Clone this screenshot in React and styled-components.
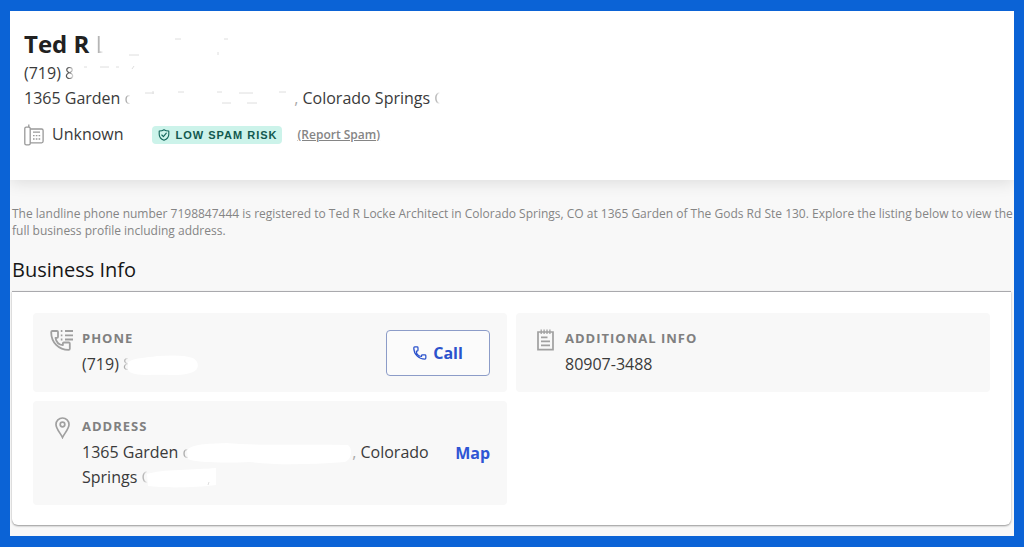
import React from "react"
import styled, { createGlobalStyle } from "styled-components";

const GlobalStyle = createGlobalStyle`
	* {
		box-sizing: border-box;
	}
	body {
		margin: 0;
		background: #0b63d6;
		color: #3a3a3a;
		font-family: "Open Sans", "Noto Sans", sans-serif;
		font-size: 16px;
		line-height: 25px;
	}
	h1, h2, h3, p {
		margin: 0;
	}
`

const DeskPhoneIcon = () => (
	<svg width="20" height="22" viewBox="0 0 20 22" fill="none" stroke="#999" strokeWidth="1.3" aria-hidden="true">
		<rect x="0.8" y="3.2" width="5.4" height="17.6" rx="1.4" />
		<path d="M4.8 3V0.5M6.2 5H17.6a1.5 1.5 0 0 1 1.5 1.5v10.8a1.5 1.5 0 0 1-1.5 1.5H6.2" />
		<path d="M9 8.2h7M9 11.7h1.6M11.8 11.7h1.6M14.6 11.7h1.6M9 15h1.6M11.8 15h1.6M14.6 15h1.6" />
	</svg>
)

const ShieldIcon = () => (
	<svg width="12" height="12" viewBox="0 0 12 12" fill="none" stroke="#12655a" strokeWidth="1.1" strokeLinejoin="round" strokeLinecap="round" aria-hidden="true">
		<path d="M6 0.7C4.6 1.7 3 2 1.2 2v3.2c0 3 1.8 5 4.8 6.1 3-1.1 4.8-3.1 4.8-6.1V2C9 2 7.4 1.7 6 0.7z" />
		<path d="M3.8 6l1.6 1.6 2.9-3.4" />
	</svg>
)

const PhoneListIcon = () => (
	<svg width="24" height="23" viewBox="0 0 24 23" fill="none" stroke="#a0a0a0" strokeWidth="1.8" strokeLinejoin="round" aria-hidden="true">
		<path d="M2.4 2H7c.6 0 1 .4 1 1v4.8c0 .6-.4 1-1 1H5.5c.6 4 3.3 6.8 7.4 7.4v-1.7c0-.6.4-1 1-1h4.9c.6 0 1 .4 1 1v5.2c0 .7-.5 1.2-1.2 1.2C8.7 20.9 1.2 13.5 1.2 3.3c0-.8.4-1.3 1.2-1.3z" />
		<path d="M15 2h8M15 6.3h8M15 10.5h8M10.8 2h1.6M10.8 6.3h1.6M10.8 10.5h1.6" />
	</svg>
)

const CallIcon = () => (
	<svg width="14" height="14" viewBox="0 0 18 18" fill="none" stroke="#2b52cc" strokeWidth="1.6" strokeLinejoin="round" aria-hidden="true">
		<path d="M2.2 1.2h3.1c.7 0 1.1.5 1.1 1.1v3.3c0 .7-.4 1.1-1.1 1.1H4.2c.4 3.7 3.1 6.4 6.8 6.8v-1.1c0-.7.4-1.1 1.1-1.1h3.3c.7 0 1.1.4 1.1 1.1v3.1c0 .8-.5 1.3-1.3 1.3C7.3 16.8 1 10.5 1 2.5c0-.8.4-1.3 1.2-1.3z" />
	</svg>
)

const NotepadIcon = () => (
	<svg width="17" height="22" viewBox="0 0 17 22" fill="none" stroke="#a0a0a0" strokeWidth="1.7" aria-hidden="true">
		<path d="M1 3h15v17.6H1z" />
		<path d="M4.2 0.5v4.5M7.1 0.5v4.5M10 0.5v4.5M12.9 0.5v4.5" strokeWidth="1.3" />
		<path d="M4 8.3h6.5M4 12.3h9M4 16.3h9" />
	</svg>
)

const PinIcon = () => (
	<svg width="15" height="22" viewBox="0 0 15 22" fill="none" stroke="#a0a0a0" strokeWidth="1.7" aria-hidden="true">
		<path d="M7.5 20.5C5.5 16.2 1 11.8 1 7.5a6.5 6.5 0 0 1 13 0c0 4.300-4.500 8.700-6.500 13z" />
		<circle cx="7.5" cy="7.5" r="2.3" />
	</svg>
)

// brushed-out part of a line, with the few specks the brush left behind
const Redacted = ({width, blob, specks})=>{
	return <Brush width={width} height="22" viewBox={`0 0 ${width} 22`} aria-hidden="true">
		{blob && <path fill="#fff" d={blob} />}
		{specks && <path d={specks} fill="none" stroke="#dedede" strokeWidth="1" />}
	</Brush>
}

const InfoPanel = ({icon, title, action, children})=>{
	return <Panel>
		<IconBox>{icon}</IconBox>
		<PanelText>
			<PanelTitle>{title}</PanelTitle>
			<p>{children}</p>
		</PanelText>
		{action}
	</Panel>
}

const App = ()=>{
	return <Frame>
		<GlobalStyle />
		<Header>
			<Name>Ted R <Faint>L</Faint><Redacted width={133} specks="M67 3h6M116 3h4M110 19v-3M21 19h10" /></Name>
			<p>(719) <Faint $strong>8</Faint><Redacted width={70} specks="M10 3h3M26 3h9M42 3h3M60 2l-2 3" /></p>
			<p>1365 Garden <Faint>o</Faint><Redacted width={160} specks="M11 4h9M19 2v3M44 3h6M83 3h5M105 4h14M88 14h9M113 14h10M145 3h7" /><Pale>,</Pale> Colorado Springs <Faint>C</Faint></p>
			<Status>
				<LineType><DeskPhoneIcon />Unknown</LineType>
				<Badge><ShieldIcon />LOW SPAM RISK</Badge>
				<Report href="#report">(Report Spam)</Report>
			</Status>
		</Header>

		<Main>
			<Summary>The landline phone number 7198847444 is registered to Ted R Locke Architect in Colorado Springs, CO at 1365 Garden of The Gods Rd Ste 130. Explore the listing below to view the full business profile including address.</Summary>
			<SectionTitle>Business Info</SectionTitle>
			<Card>
				<InfoPanel icon={<PhoneListIcon />} title="PHONE" action={<CallButton type="button"><CallIcon />Call</CallButton>}>
					(719) <Faint>8</Faint><Redacted width={66} blob="M-4 7C4 2 15 3 25 1C40 0 53 0 61 3C68 7 67 15 61 17C50 22 30 19 17 20C6 20 -2 19 -4 15z" />
				</InfoPanel>
				<InfoPanel icon={<NotepadIcon />} title="ADDITIONAL INFO">80907-3488</InfoPanel>
				<InfoPanel icon={<PinIcon />} title="ADDRESS" action={<MapLink href="#map">Map</MapLink>}>
					1365 Garden <Faint>o</Faint><Redacted width={160} blob="M-5 7C2 0 20 1 34 0C66 3 114 1 156 2C161 6 160 16 153 19C114 22 80 22 58 19C36 20 4 20 -4 16z" /><Pale>,</Pale> Colorado Springs <Faint>C</Faint><Redacted width={64} blob="M-5 6C10 1 43 2 64 0V17C43 20 10 20 -4 18z" specks="M56 17l1-3" />
				</InfoPanel>
			</Card>
		</Main>
	</Frame>
}

export default App;


const Frame = styled.div`
	display: flex;
	flex-direction: column;
	min-height: 100vh;
	border: solid #0b63d6;
	border-width: 11px 10px;
	background: #f8f8f8;
`

const Header = styled.header`
	padding: 17px 14px 33px;
	background: #fff;
	box-shadow: 0 2px 16px rgba(0, 0, 0, 0.12);
	clip-path: inset(0 0 -24px 0);
`

const Name = styled.h1`
	margin-bottom: 1px;
	font-size: 24px;
	line-height: 32px;
	font-weight: 700;
	color: #212121;
`

const Brush = styled.svg`
	overflow: visible;
	vertical-align: middle;
`

const Faint = styled.span`
	font-weight: 400;
	color: transparent;
	background: ${(props) => props.$strong
		? "linear-gradient(90deg, #555 40%, #ddd 90%)"
		: "linear-gradient(90deg, #aaa 15%, transparent 60%)"};
	background-clip: text;
`

const Pale = styled.span`
	color: #aaa;
`

const Status = styled.div`
	display: flex;
	align-items: center;
	margin-top: 11px;
`

const LineType = styled.span`
	display: flex;
	align-items: center;
	gap: 8px;
	margin-right: 28px;
`

const Badge = styled.span`
	display: flex;
	align-items: center;
	gap: 6px;
	margin-right: 16px;
	padding: 0 4px 0 6px;
	border-radius: 4px;
	background: #ccf3ea;
	color: #12594f;
	font-family: "Liberation Sans", Arial, sans-serif;
	font-size: 11px;
	font-weight: 700;
	line-height: 18px;
	letter-spacing: 1px;
`

const Report = styled.a`
	font-size: 12px;
	line-height: 18px;
	font-weight: 600;
	color: #858585;
`

const Main = styled.main`
	display: flex;
	flex-direction: column;
	flex: 1;
	padding: 25px 0 11px 2px;
`

const Summary = styled.p`
	font-size: 12px;
	line-height: 17px;
	color: #858585;
`

const SectionTitle = styled.h2`
	margin: 17px 0 7px;
	font-size: 20px;
	line-height: 28px;
	font-weight: 500;
	color: #161616;
`

const Card = styled.section`
	display: grid;
	grid-template-columns: 1fr 1fr;
	align-items: start;
	align-content: start;
	gap: 9px;
	flex: 1;
	margin-right: 3px;
	padding: 21px 21px 20px;
	border-top: 1px solid #a9a9ad;
	border-radius: 0 0 6px 6px;
	background: #fff;
	box-shadow: 0 1px 2px rgba(0, 0, 0, 0.4);
`

const Panel = styled.article`
	display: flex;
	align-items: center;
	padding: 16px 17px 15px;
	border-radius: 4px;
	background: #f8f8f8;
`

const IconBox = styled.div`
	display: flex;
	justify-content: center;
	align-self: flex-start;
	width: 24px;
	margin-right: 8px;
`

const PanelText = styled.div`
	flex: 1;
	margin-right: 8px;
`

const PanelTitle = styled.h3`
	font-size: 13px;
	line-height: 18px;
	margin-bottom: 5px;
	font-weight: 700;
	letter-spacing: 1px;
	color: #808080;
`

const CallButton = styled.button`
	display: flex;
	align-items: center;
	justify-content: center;
	gap: 6px;
	width: 104px;
	height: 46px;
	border: 1px solid #8c9cc8;
	border-radius: 4px;
	background: #fbfbfb;
	color: #2b52cc;
	font: inherit;
	font-weight: 700;
	cursor: pointer;
`

const MapLink = styled.a`
	color: #2f55d4;
	font-weight: 700;
	text-decoration: none;
`
